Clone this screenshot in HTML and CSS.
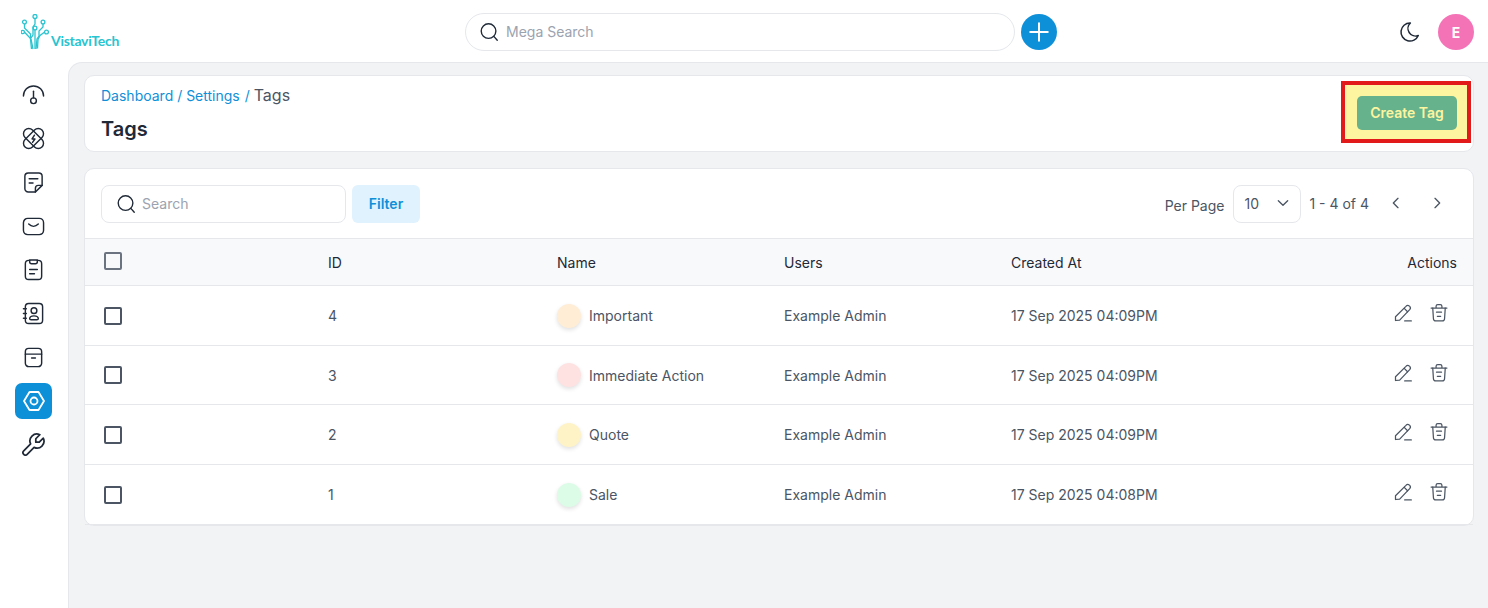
FILE: index.html
```html
<!DOCTYPE html>
<html lang="en">
<head>
  <meta charset="UTF-8">
  <title>Tags</title>
  <link rel="stylesheet" href="styles.css">
</head>
<body>
  <header class="topbar">
    <a class="logo">
      <svg class="logo-mark" viewBox="0 0 28 36" fill="none" stroke="#29c4d0" stroke-width="1.3">
        <circle cx="14" cy="2.5" r="2"/><circle cx="3.500" cy="8" r="1.900"/><circle cx="22" cy="8" r="1.900"/>
        <circle cx="14" cy="14" r="1.900"/><circle cx="1.800" cy="18" r="1.700"/><circle cx="25.500" cy="18" r="1.900"/>
        <path d="M14 4.500V10l-2 3v8l-2 3"/><path d="M3.500 10v4l6 6v5l1 10"/><path d="M22 10v3l-4 4v5l-2 3-1 10"/>
        <path d="M3.400 18l6.600 7 2 10"/><path d="M23.700 18l-4.700 3.500-2 4-.500 9"/><path d="M14 16v19"/>
      </svg>
      <span class="logo-text">VistaviTech</span>
    </a>
    <div class="mega">
      <div class="mega-search">
        <svg class="icon search-icon" viewBox="0 0 24 24"><circle cx="11.500" cy="11" r="8"/><path d="M17.500 17l3.500 4"/></svg>
        <span class="placeholder">Mega Search</span>
      </div>
      <button class="add-btn">
        <svg viewBox="0 0 24 24"><path d="M12 2.500v19M2.500 12h19"/></svg>
      </button>
    </div>
    <div class="top-right">
      <svg class="icon moon" viewBox="0 0 24 24"><path d="M12 3c.132 0 .263 0 .393 0a7.500 7.500 0 0 0 7.920 12.446a9 9 0 1 1 -8.313 -12.454z"/></svg>
      <div class="avatar">E</div>
    </div>
  </header>

  <div class="shell">
    <nav class="sidebar">
      <a class="nav-item"><svg class="icon" viewBox="0 0 24 24"><path d="M1.500 12.500a10.500 10.500 0 0 1 21 0"/><path d="M12 7.500v7"/><circle cx="12" cy="17.500" r="3"/></svg></a>
      <a class="nav-item"><svg class="icon" viewBox="0 0 24 24"><rect x="-.5" y="6.500" width="25" height="11" rx="5.500" transform="rotate(45 12 12)"/><rect x="-.5" y="6.500" width="25" height="11" rx="5.500" transform="rotate(-45 12 12)"/><path d="M13 8.500l-2.500 4h3l-2.500 3.500"/></svg></a>
      <a class="nav-item"><svg class="icon" viewBox="0 0 24 24"><path d="M14 22H6.500A3.500 3.500 0 0 1 3 18.500V5.500A3.500 3.500 0 0 1 6.500 2h11A3.500 3.500 0 0 1 21 5.500V15z"/><path d="M14 22v-4a3 3 0 0 1 3-3h4"/><path d="M7.500 8h9M7.500 12.500h4"/></svg></a>
      <a class="nav-item"><svg class="icon" viewBox="0 0 24 24"><rect x="1.500" y="3.500" width="21" height="17" rx="4.500"/><path d="M7 9.500c3 3 7 3 10 0"/></svg></a>
      <a class="nav-item"><svg class="icon" viewBox="0 0 24 24"><path d="M8 2.500H7a3.500 3.500 0 0 0-3.500 3.500v13A3.500 3.500 0 0 0 7 22.500h10a3.500 3.500 0 0 0 3.500-3.500V6A3.500 3.500 0 0 0 17 2.500h-1"/><path d="M8 2v2a2 2 0 0 0 2 2h4a2 2 0 0 0 2-2V2z"/><path d="M8 12h8M8 16.500h5"/></svg></a>
      <a class="nav-item"><svg class="icon" viewBox="0 0 24 24"><rect x="3.500" y="1.500" width="18" height="21" rx="3.500"/><circle cx="12.500" cy="9" r="3"/><path d="M8 17.500c0-2 2-3 4.500-3s4.500 1 4.500 3c0 .800-.500 1-1.500 1h-6c-1 0-1.500-.200-1.500-1z"/><path d="M1.500 7h3M1.500 12h3M1.500 17h3"/></svg></a>
      <a class="nav-item"><svg class="icon" viewBox="0 0 24 24"><path d="M3.500 8.500V6a3.500 3.500 0 0 1 3.500-3.500h10A3.500 3.500 0 0 1 20.500 6v2.500"/><path d="M3.500 8.500h17V18a3.500 3.500 0 0 1-3.500 3.500H7A3.500 3.500 0 0 1 3.500 18z"/><path d="M10 12.500h4"/></svg></a>
      <a class="nav-item active"><svg class="icon" viewBox="0 0 24 24"><path d="M7.500 3h9l5.500 9-5.500 9h-9L2 12z"/><circle cx="12" cy="12" r="3.500"/></svg></a>
      <a class="nav-item"><svg class="icon wrench" viewBox="2 2 20 20"><path d="M7 10h3v-3l-3.500 -3.500a6 6 0 0 1 8 8l6 6a2 2 0 0 1 -3 3l-6 -6a6 6 0 0 1 -8 -8l3.500 3.500"/></svg></a>
    </nav>

    <main class="content">
      <section class="card page-head">
        <div>
          <div class="crumbs"><a>Dashboard</a> / <a>Settings</a> <i class="sep">/</i> <span>Tags</span></div>
          <h1>Tags</h1>
        </div>
        <div class="highlight"><button class="create-btn">Create Tag</button></div>
      </section>

      <section class="card list">
        <div class="toolbar">
          <div class="search">
            <svg class="icon search-icon" viewBox="0 0 24 24"><circle cx="11.500" cy="11" r="8"/><path d="M17.500 17l3.500 4"/></svg>
            <span class="placeholder">Search</span>
          </div>
          <button class="filter-btn">Filter</button>
          <div class="pager">
            <span class="per-page">Per Page</span>
            <div class="select">10
              <svg viewBox="0 0 24 24" class="chev"><path d="M5 8.500l7 7 7-7"/></svg>
            </div>
            <span class="count">1 - 4 of 4</span>
            <svg viewBox="0 0 24 24" class="chev page-arrow"><path d="M15 5l-7 7 7 7"/></svg>
            <svg viewBox="0 0 24 24" class="chev page-arrow"><path d="M9 5l7 7-7 7"/></svg>
          </div>
        </div>

        <table class="tags">
          <colgroup><col class="c-check"><col class="c-id"><col class="c-name"><col class="c-users"><col class="c-date"><col></colgroup>
          <thead>
            <tr>
              <th><span class="check head-check"></span></th>
              <th>ID</th><th>Name</th><th>Users</th><th>Created At</th><th class="right">Actions</th>
            </tr>
          </thead>
          <tbody>
            <tr>
              <td><span class="check"></span></td><td>4</td>
              <td><span class="tag"><i class="dot orange"></i>Important</span></td>
              <td>Example Admin</td><td>17 Sep 2025 04:09PM</td>
              <td class="right"><span class="acts">
                <svg class="icon act" viewBox="0 0 24 24"><path d="M3 21v-4.500L15.500 4a2.800 2.800 0 0 1 4.500 4L8 20.500 3 21z"/><path d="M13.500 6.500l4 4M14 21.500h8"/></svg>
                <svg class="icon act" viewBox="0 0 24 24"><path d="M2.500 6h19M8.500 5.500V4a2 2 0 0 1 2-2h3a2 2 0 0 1 2 2v1.500"/><path d="M4.500 6l.800 12.500a3 3 0 0 0 3 3h7.400a3 3 0 0 0 3-3L19.500 6"/><path d="M9 11h6M10 16h4"/></svg>
              </span></td>
            </tr>
            <tr>
              <td><span class="check"></span></td><td>3</td>
              <td><span class="tag"><i class="dot red"></i>Immediate Action</span></td>
              <td>Example Admin</td><td>17 Sep 2025 04:09PM</td>
              <td class="right"><span class="acts">
                <svg class="icon act" viewBox="0 0 24 24"><path d="M3 21v-4.500L15.500 4a2.800 2.800 0 0 1 4.500 4L8 20.500 3 21z"/><path d="M13.500 6.500l4 4M14 21.500h8"/></svg>
                <svg class="icon act" viewBox="0 0 24 24"><path d="M2.500 6h19M8.500 5.500V4a2 2 0 0 1 2-2h3a2 2 0 0 1 2 2v1.500"/><path d="M4.500 6l.800 12.500a3 3 0 0 0 3 3h7.400a3 3 0 0 0 3-3L19.500 6"/><path d="M9 11h6M10 16h4"/></svg>
              </span></td>
            </tr>
            <tr>
              <td><span class="check"></span></td><td>2</td>
              <td><span class="tag"><i class="dot yellow"></i>Quote</span></td>
              <td>Example Admin</td><td>17 Sep 2025 04:09PM</td>
              <td class="right"><span class="acts">
                <svg class="icon act" viewBox="0 0 24 24"><path d="M3 21v-4.500L15.500 4a2.800 2.800 0 0 1 4.500 4L8 20.500 3 21z"/><path d="M13.500 6.500l4 4M14 21.500h8"/></svg>
                <svg class="icon act" viewBox="0 0 24 24"><path d="M2.500 6h19M8.500 5.500V4a2 2 0 0 1 2-2h3a2 2 0 0 1 2 2v1.500"/><path d="M4.500 6l.800 12.500a3 3 0 0 0 3 3h7.400a3 3 0 0 0 3-3L19.500 6"/><path d="M9 11h6M10 16h4"/></svg>
              </span></td>
            </tr>
            <tr>
              <td><span class="check"></span></td><td>1</td>
              <td><span class="tag"><i class="dot green"></i>Sale</span></td>
              <td>Example Admin</td><td>17 Sep 2025 04:08PM</td>
              <td class="right"><span class="acts">
                <svg class="icon act" viewBox="0 0 24 24"><path d="M3 21v-4.500L15.500 4a2.800 2.800 0 0 1 4.500 4L8 20.500 3 21z"/><path d="M13.500 6.500l4 4M14 21.500h8"/></svg>
                <svg class="icon act" viewBox="0 0 24 24"><path d="M2.500 6h19M8.500 5.500V4a2 2 0 0 1 2-2h3a2 2 0 0 1 2 2v1.500"/><path d="M4.500 6l.800 12.500a3 3 0 0 0 3 3h7.400a3 3 0 0 0 3-3L19.500 6"/><path d="M9 11h6M10 16h4"/></svg>
              </span></td>
            </tr>
          </tbody>
        </table>
      </section>
    </main>
  </div>
</body>
</html>
```

FILE: styles.css
```css
* { box-sizing: border-box; }
html, body { height: 100%; }
body { margin: 0; font-family: Inter, "Liberation Sans", sans-serif; font-size: 14px; color: #4b5563; background: #fff; overflow: hidden; }
button { font-family: inherit; border: none; cursor: pointer; }
.icon { width: 24px; height: 24px; fill: none; stroke: #1f2937; stroke-width: 1.5; stroke-linecap: round; stroke-linejoin: round; }

/* Top bar */
.topbar { height: 62px; display: flex; align-items: center; position: relative; }
.logo { width: 465px; height: 62px; padding: 0 0 12px 21px; display: flex; align-items: flex-end; }
.logo-mark { width: 28px; height: 36px; }
.logo-text { font-family: Lato, sans-serif; font-size: 14px; font-weight: 700; letter-spacing: -.3px; color: #29c4d0; margin-left: 2px; line-height: 18px; }
.mega { display: flex; align-items: center; gap: 6px; margin-top: 2px; }
.mega-search { width: 550px; height: 38px; border: 1px solid #e5e7eb; border-radius: 19px; display: flex; align-items: center; padding: 0 0 1px 12px; gap: 6px; }
.search-icon { width: 22px; height: 22px; }
.placeholder { color: #9ca3af; }
.add-btn { width: 36px; height: 36px; border-radius: 50%; background: #0e90d9; padding: 6px; display: flex; }
.add-btn svg { fill: none; stroke: #fff; stroke-width: 2; width: 24px; height: 24px; }
.top-right { margin-left: auto; padding-right: 14px; display: flex; align-items: center; gap: 16px; margin-top: 2px; }
.avatar { width: 36px; height: 36px; border-radius: 50%; background: #f472b6; color: #fff; font-weight: 700; font-size: 14px; display: flex; align-items: center; justify-content: center; }

/* Sidebar */
.shell { display: flex; height: 546px; }
.sidebar { width: 68px; padding: 15px 0 0 15px; display: flex; flex-direction: column; gap: 7.7px; flex-shrink: 0; }
.nav-item { width: 37px; height: 36px; border-radius: 7px; display: flex; align-items: center; justify-content: center; }
.nav-item .icon { width: 23px; height: 23px; }
.nav-item.active { background: #0e90d9; }
.nav-item.active .icon { stroke: #fff; stroke-width: 1.8; width: 24px; height: 24px; }
.wrench { transform: scaleX(-1); }

/* Main */
.content { flex: 1; background: #f2f3f5; border-top: 1px solid #e5e7eb; border-left: 1px solid #e5e7eb; border-top-left-radius: 14px; padding: 12px 14px 0 15px; }
.card { background: #fff; border: 1px solid #e5e7eb; border-radius: 10px; }
.page-head { height: 77px; padding: 9px 16px 0; display: flex; justify-content: space-between; position: relative; }
.crumbs { color: #0e90d9; line-height: 20px; }
.crumbs .sep { font-style: normal; margin-left: 1px; }
.crumbs span { color: #4b5563; font-size: 16px; }
h1 { margin: 9px 0 0; font-size: 20px; line-height: 28px; font-weight: 600; color: #1f2937; }
.highlight { position: absolute; right: 2px; top: 5px; width: 130px; height: 62px; background: #fdf5a0; border: 4px solid #e21a1a; display: flex; align-items: center; justify-content: flex-end; padding: 2px 10px 0 0; }
.create-btn { width: 100px; height: 34px; border-radius: 5px; padding-bottom: 3px; background: #66b28c; color: #fdf5a0; font-size: 14px; font-weight: 600; }

.list { margin-top: 16px; }
.toolbar { height: 69px; padding: 16px 16px 0; display: flex; align-items: flex-start; }
.search { width: 245px; height: 38px; border: 1px solid #e5e7eb; border-radius: 8px; display: flex; align-items: center; padding: 0 0 1px 13px; gap: 5px; }
.filter-btn { width: 68px; height: 38px; border-radius: 6px; margin-left: 6px; padding-bottom: 3px; background: #e0f2fe; color: #0e90d9; font-size: 14px; font-weight: 600; }
.pager { margin-left: auto; display: flex; align-items: center; height: 38px; }
.per-page { margin-right: 9px; margin-top: 2px; }
.select { width: 68px; height: 38px; border: 1px solid #e5e7eb; border-radius: 8px; display: flex; align-items: center; justify-content: space-between; padding: 0 9px 2px 10px; }
.chev { width: 16px; height: 16px; fill: none; stroke: #4b5563; stroke-width: 2; stroke-linecap: round; stroke-linejoin: round; }
.count { margin: 0 19px 2px 8px; }
.page-arrow { margin-bottom: 2px; }
.page-arrow + .page-arrow { margin-left: 25px; }
.pager .page-arrow:last-child { margin-right: 12px; }

/* Table */
.tags { width: 100%; border-collapse: collapse; table-layout: fixed; }
.c-check { width: 243px; }
.c-id { width: 229px; }
.c-name { width: 227px; }
.c-users { width: 227px; }
.c-date { width: 300px; }
th { background: #f8f9fb; height: 47px; text-align: left; font-weight: 400; color: #1f2937; padding: 1px 0 0; border-top: 1px solid #e5e7eb; border-bottom: 1px solid #e5e7eb; }
td { height: 59.600px; padding: 1px 0 0; border-bottom: 1px solid #e5e7eb; }
tr:last-child td { height: 60.300px; }
th:first-child, td:first-child { padding-left: 19px; }
.right { text-align: right; }
th.right, td.right { padding-right: 16px; }
.check { display: block; width: 18px; height: 18px; border: 2px solid #4b5563; border-radius: 2px; }
.head-check { border-color: #6b7280; margin-top: -3px; }
.tag { display: flex; align-items: center; gap: 8px; }
.dot { width: 24px; height: 24px; border-radius: 50%; box-shadow: 0 2px 4px rgba(0,0,0,.12); }
.orange { background: #ffedd5; }
.red { background: #fee2e2; }
.yellow { background: #fef3c7; }
.green { background: #dcfce7; }
.acts { display: inline-flex; gap: 16px; padding: 0 8px 5px 0; vertical-align: middle; }
.act { width: 20px; height: 20px; stroke: #4b5563; stroke-width: 1.5; }
```
